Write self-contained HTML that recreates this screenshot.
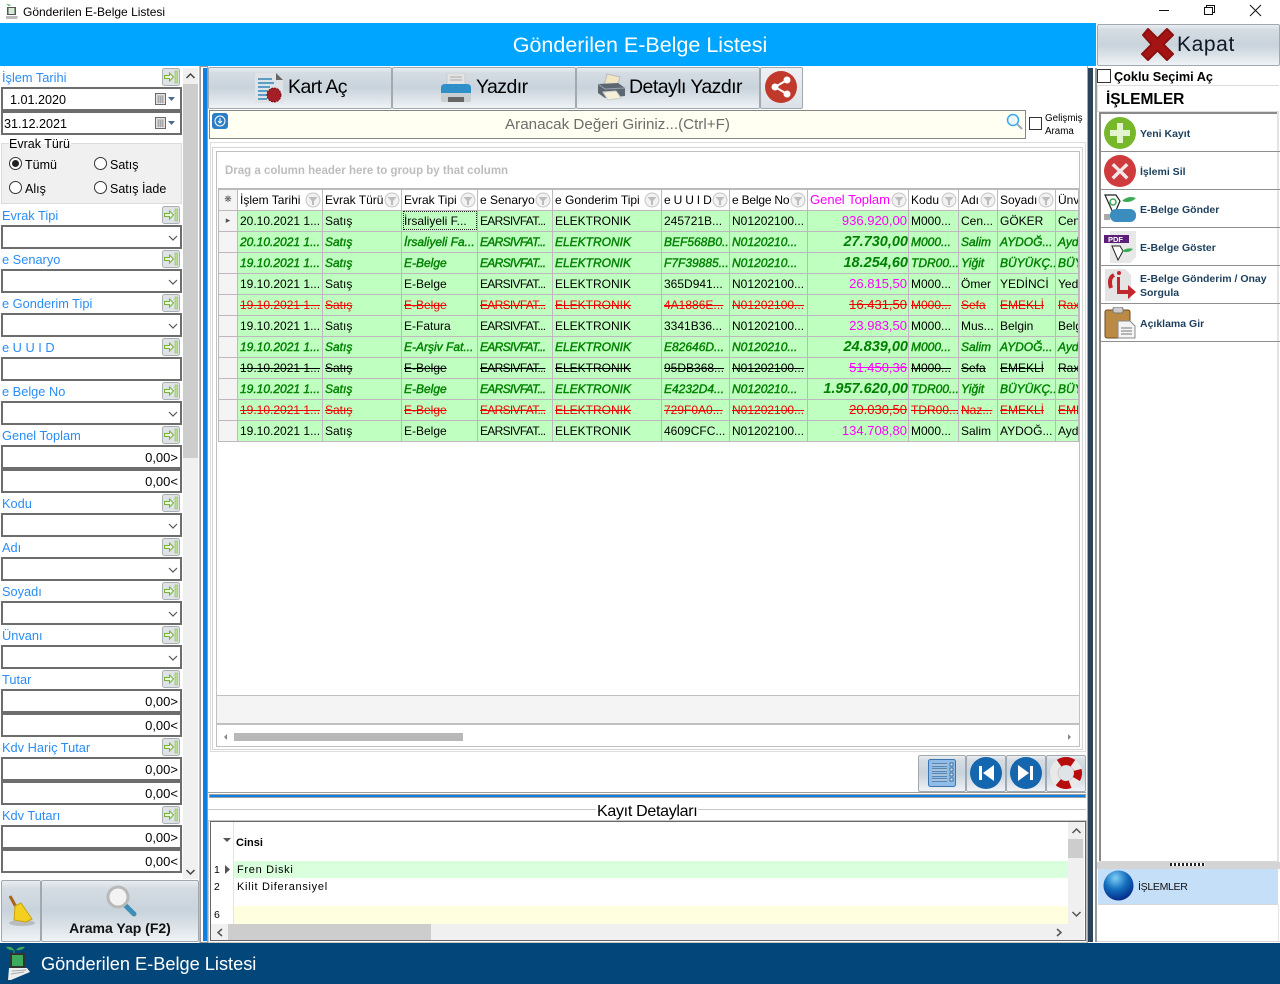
<!DOCTYPE html>
<html lang="tr"><head><meta charset="utf-8"><title>Gönderilen E-Belge Listesi</title>
<style>
*{box-sizing:border-box}
html,body{margin:0;padding:0}
body{width:1280px;height:984px;overflow:hidden;position:relative;background:#fff;font-family:"Liberation Sans",sans-serif;font-size:12px;color:#000}
.a,.l,.i,.sb,.btn,.rad,.it{position:absolute}
.a{white-space:nowrap}
.l{left:2px;height:16px;line-height:16px;color:#2a8df5;font-size:12.8px;white-space:nowrap}
.i{left:1px;width:181px;height:24px;border:2px solid #6d6d6d;background:#fff;line-height:22px;font-size:13px;text-align:right;padding-right:2px}
.sb{left:162px;width:18px;height:18px}
.btn{background:linear-gradient(#e9edf1 0,#d5dce3 12%,#c9d3dc 50%,#dfe5ea 80%,#f0f3f6 100%);border:1px solid #a0a8b0;border-radius:2px;text-align:center}
.rad{width:13px;height:13px;border:1px solid #333;border-radius:50%;background:#fff}
.tb{font-size:19.5px;line-height:28px;letter-spacing:-.55px}
.fl{font-size:12.5px;line-height:15px}
table{position:absolute;left:218px;top:188px;border-collapse:collapse;table-layout:fixed;width:860px;font-size:12px}
td,th{border:1px solid #bdb8bd;padding:0 0 0 2px;overflow:hidden;white-space:nowrap;height:21px;font-weight:normal;text-align:left;background:#bfffbf}
th{background:#fff;position:relative;border-top:2px solid #bdb8bd}
td:first-child,th:first-child{background:#f4f4f4;padding:0;text-align:center;color:#555;font-size:9px}
td:nth-child(5){letter-spacing:-.7px}
th svg{position:absolute;right:1px;top:2px;width:16px;height:16px}
td.m{text-align:right;padding:0 1px 0 0;color:#f0f;font-size:13px}
tr.g td{color:#008000;font-style:italic;-webkit-text-stroke:.4px #008000}
tr.g td.m{color:#008000;font-size:14.5px;font-weight:bold;padding:0;-webkit-text-stroke:0}
tr.r td{color:#f00000;text-decoration:line-through}
tr.r td.m{color:#f00000}
tr.k td{text-decoration:line-through}
td:first-child{text-decoration:none!important}
.it{left:1101px;width:179px;height:38px;border-bottom:1px solid #8f8f8f;font-size:10.5px;font-weight:bold;color:#1c3f5c;line-height:13px}
.it svg{position:absolute;left:3px;top:3px;width:32px;height:32px}
.it span{position:absolute;left:39px;top:14px;white-space:nowrap}
</style></head><body>
<svg width="0" height="0" style="position:absolute">
<symbol id="f" viewBox="0 0 16 16"><circle cx="8" cy="8" r="7" fill="#f2f2f2" stroke="#c4c4c4"/><path d="M3.5 5h9L9 9v4H7V9z" fill="#bdbdbd"/></symbol>
<symbol id="b" viewBox="0 0 18 18"><rect x=".5" y=".5" width="17" height="17" rx="2" fill="#dfe3e5" stroke="#a9b0b3"/><path d="M2.500 7.500h5V5l4 4-4 4v-2.500h-5z" fill="#eef9e2" stroke="#74b334"/><rect x="13" y="3" width="2.500" height="12" fill="#b9dd8e" stroke="#85b84f" stroke-width=".5"/></symbol>
<symbol id="cal" viewBox="0 0 12 13"><rect x=".5" y=".5" width="10" height="11" fill="#e2e2e2" stroke="#6a6a6a"/><path d="M2 3h7M2 5h7M2 7h7M2 9h7M3.5 3v7M5.5 3v7M7.5 3v7" stroke="#999" stroke-width=".7"/></symbol>
<symbol id="chev" viewBox="0 0 10 6"><path d="M1 1l4 4 4-4" fill="none" stroke="#555" stroke-width="1.2"/></symbol>
</svg>

<!-- title bar -->
<svg class="a" style="left:5px;top:3px" width="14" height="17" viewBox="0 0 14 17"><path d="M1 1l5 1-2 1z" fill="#2a9a4a"/><rect x="2" y="4" width="9" height="8" fill="#555"/><rect x="3.500" y="5" width="6" height="6" fill="#d6ead8"/><path d="M1 13h12l-1 3H1z" fill="#bbb"/></svg>
<div class="a" style="left:23px;top:4px;line-height:16px;font-size:12px">Gönderilen E-Belge Listesi</div>
<svg class="a" style="left:1150px;top:0" width="130" height="22" fill="none" stroke="#111"><path d="M9 10.500h10"/><rect x="54.500" y="7.500" width="8" height="7"/><path d="M56.500 7.500v-2h8v7h-2"/><path d="M100 5l11 11M111 5l-11 11"/></svg>

<!-- blue header -->
<div class="a" style="left:0;top:23px;width:1096px;height:43px;background:#00a5ff;color:#fff;font-size:21.5px;line-height:45px;text-align:center;padding-left:184px"><span style="position:relative">Gönderilen E-Belge Listesi</span></div>
<div class="btn" style="left:1097px;top:24px;width:183px;height:42px"></div>
<svg class="a" style="left:1140px;top:27px" width="35" height="35" viewBox="0 0 35 35"><path d="M3 8l5-6 9.500 9.500L27 2l6 6-9.500 9.500L33 27l-6 6-9.500-9.500L8 33l-6-6 9.500-9.500z" fill="#a51414" stroke="#8d1010" stroke-linejoin="round" stroke-width="2"/></svg>
<div class="a" style="left:1177px;top:31px;font-size:21px;line-height:28px;color:#101828;letter-spacing:.6px">Kapat</div>

<!-- left panel -->
<div class="l" style="top:70px">İşlem Tarihi</div><svg class="sb" style="top:68px"><use href="#b"/></svg>
<div class="i" style="top:87px;text-align:left;padding-left:7px;font-size:12.6px">1.01.2020</div>
<div class="i" style="top:111px;text-align:left;padding-left:1px;font-size:12.6px">31.12.2021</div>
<svg class="a" style="left:155px;top:93px" width="22" height="13"><use href="#cal" width="12" height="13"/><path d="M13 4h7l-3.500 4z" fill="#4a6a90"/></svg>
<svg class="a" style="left:155px;top:117px" width="22" height="13"><use href="#cal" width="12" height="13"/><path d="M13 4h7l-3.500 4z" fill="#4a6a90"/></svg>
<div class="a" style="left:1px;top:143px;width:181px;height:61px;background:#f0f0f0;border:1px solid #dcdcdc"></div>
<div class="a" style="left:9px;top:137px;background:#fff;height:7px;width:62px"></div>
<div class="a fl" style="left:9px;top:137px">Evrak Türü</div>
<div class="rad" style="left:9px;top:157px"></div><div class="a" style="left:12px;top:160px;width:7px;height:7px;border-radius:50%;background:#222"></div>
<div class="a fl" style="left:25px;top:158px">Tümü</div>
<div class="rad" style="left:94px;top:157px"></div><div class="a fl" style="left:110px;top:158px">Satış</div>
<div class="rad" style="left:9px;top:181px"></div><div class="a fl" style="left:25px;top:182px">Alış</div>
<div class="rad" style="left:94px;top:181px"></div><div class="a fl" style="left:110px;top:182px">Satış İade</div>

<div class="l" style="top:208px">Evrak Tipi</div><svg class="sb" style="top:206px"><use href="#b"/></svg>
<div class="i" style="top:225px"></div><svg class="a" style="left:168px;top:235px" width="10" height="6"><use href="#chev"/></svg>
<div class="l" style="top:252px">e Senaryo</div><svg class="sb" style="top:250px"><use href="#b"/></svg>
<div class="i" style="top:269px"></div><svg class="a" style="left:168px;top:279px" width="10" height="6"><use href="#chev"/></svg>
<div class="l" style="top:296px">e Gonderim Tipi</div><svg class="sb" style="top:294px"><use href="#b"/></svg>
<div class="i" style="top:313px"></div><svg class="a" style="left:168px;top:323px" width="10" height="6"><use href="#chev"/></svg>
<div class="l" style="top:340px">e U U I D</div><svg class="sb" style="top:338px"><use href="#b"/></svg>
<div class="i" style="top:357px"></div>
<div class="l" style="top:384px">e Belge No</div><svg class="sb" style="top:382px"><use href="#b"/></svg>
<div class="i" style="top:401px"></div><svg class="a" style="left:168px;top:411px" width="10" height="6"><use href="#chev"/></svg>
<div class="l" style="top:428px">Genel Toplam</div><svg class="sb" style="top:426px"><use href="#b"/></svg>
<div class="i" style="top:445px">0,00&gt;</div><div class="i" style="top:469px">0,00&lt;</div>
<div class="l" style="top:496px">Kodu</div><svg class="sb" style="top:494px"><use href="#b"/></svg>
<div class="i" style="top:513px"></div><svg class="a" style="left:168px;top:523px" width="10" height="6"><use href="#chev"/></svg>
<div class="l" style="top:540px">Adı</div><svg class="sb" style="top:538px"><use href="#b"/></svg>
<div class="i" style="top:557px"></div><svg class="a" style="left:168px;top:567px" width="10" height="6"><use href="#chev"/></svg>
<div class="l" style="top:584px">Soyadı</div><svg class="sb" style="top:582px"><use href="#b"/></svg>
<div class="i" style="top:601px"></div><svg class="a" style="left:168px;top:611px" width="10" height="6"><use href="#chev"/></svg>
<div class="l" style="top:628px">Ünvanı</div><svg class="sb" style="top:626px"><use href="#b"/></svg>
<div class="i" style="top:645px"></div><svg class="a" style="left:168px;top:655px" width="10" height="6"><use href="#chev"/></svg>
<div class="l" style="top:672px">Tutar</div><svg class="sb" style="top:670px"><use href="#b"/></svg>
<div class="i" style="top:689px">0,00&gt;</div><div class="i" style="top:713px">0,00&lt;</div>
<div class="l" style="top:740px">Kdv Hariç Tutar</div><svg class="sb" style="top:738px"><use href="#b"/></svg>
<div class="i" style="top:757px">0,00&gt;</div><div class="i" style="top:781px">0,00&lt;</div>
<div class="l" style="top:808px">Kdv Tutarı</div><svg class="sb" style="top:806px"><use href="#b"/></svg>
<div class="i" style="top:825px">0,00&gt;</div><div class="i" style="top:849px">0,00&lt;</div>

<!-- left scrollbar -->
<div class="a" style="left:183px;top:68px;width:15px;height:811px;background:#f0f0f0"></div>
<div class="a" style="left:183px;top:84px;width:15px;height:374px;background:#cdcdcd"></div>
<svg class="a" style="left:185px;top:72px" width="11" height="8" fill="none" stroke="#444" stroke-width="1.500"><path d="M1.500 6L5.500 2l4 4"/></svg>
<svg class="a" style="left:185px;top:868px" width="11" height="8" fill="none" stroke="#444" stroke-width="1.500"><path d="M1.500 2l4 4 4-4"/></svg>

<!-- search buttons -->
<div class="a" style="left:0;top:879px;width:200px;height:64px;background:#fff"></div>
<div class="btn" style="left:1px;top:880px;width:40px;height:62px"></div>
<div class="btn" style="left:41px;top:880px;width:158px;height:62px"></div>
<svg class="a" style="left:7px;top:893px" width="30" height="34" viewBox="0 0 30 34"><ellipse cx="15" cy="30" rx="13" ry="3" fill="#999" opacity=".5"/><path d="M3 3l6 11" stroke="#a8641e" stroke-width="3"/><path d="M8 13l6-3 11 16-6 3-12-2z" fill="#f2cf21" stroke="#c9a40c"/></svg>
<svg class="a" style="left:104px;top:884px" width="34" height="34" viewBox="0 0 34 34"><path d="M21 21l9 9" stroke="#3d8fb8" stroke-width="5" stroke-linecap="round"/><circle cx="14" cy="13" r="10" fill="#f3f3f3" stroke="#b9b9b9" stroke-width="3"/></svg>
<div class="a" style="left:41px;top:920px;width:158px;text-align:center;font-weight:bold;font-size:14px;line-height:17px;color:#111">Arama Yap (F2)</div>

<!-- vertical splitter -->
<div class="a" style="left:200px;top:66px;width:8px;height:877px;background:#fff;border:1px solid #9a9a9a"></div>
<div class="a" style="left:203px;top:68px;width:4px;height:873px;background:#0f7fe0"></div>
<div class="a" style="left:199px;top:66px;width:1px;height:877px;background:#bbb"></div>

<!-- main toolbar -->
<div class="btn" style="left:208px;top:67px;width:184px;height:42px"></div>
<div class="btn" style="left:392px;top:67px;width:184px;height:42px"></div>
<div class="btn" style="left:576px;top:67px;width:184px;height:42px"></div>
<div class="btn" style="left:760px;top:67px;width:43px;height:42px;background:linear-gradient(#eef1f4,#dbe1e7)"></div>
<svg class="a" style="left:254px;top:71px" width="30" height="33" viewBox="0 0 30 33"><path d="M1 2h21l7 7v23H1z" fill="#dfe3e6"/><path d="M22 2l7 7h-7z" fill="#666"/><path d="M4 8h14M4 12h16M4 16h12M4 20h10M4 24h9M4 28h9" stroke="#5a9ec8" stroke-width="2"/><circle cx="20" cy="24" r="7" fill="#a31f25" stroke="#7c1014" stroke-dasharray="2 1"/></svg>
<div class="a tb" style="left:288px;top:73px">Kart Aç</div>
<svg class="a" style="left:440px;top:73px" width="32" height="30" viewBox="0 0 32 30"><rect x="7" y="0" width="18" height="13" fill="#e3e3e3" stroke="#ccc"/><path d="M10 4h12M10 7h12" stroke="#aaa"/><path d="M1 15q0-4 4-4h22q4 0 4 4v5H1z" fill="#2f8fc9"/><path d="M1 20h30v7q0 2-2 2H3q-2 0-2-2z" fill="#c9ced1"/><rect x="8" y="24" width="16" height="5" fill="#666"/></svg>
<div class="a tb" style="left:476px;top:73px">Yazdır</div>
<svg class="a" style="left:596px;top:73px" width="30" height="28" viewBox="0 0 30 28"><path d="M11 1l13 3-3 9H8z" fill="#f0e6c4" stroke="#bbb"/><path d="M2 11l20-1 7 5v8l-20 2-7-5z" fill="#5b6670"/><path d="M2 11l7 5 20-1" fill="none" stroke="#9aa4ad"/><path d="M7 19l13-1 5 7-13 2z" fill="#f5efd8" stroke="#ccc"/></svg>
<div class="a tb" style="left:629px;top:73px">Detaylı Yazdır</div>
<svg class="a" style="left:764px;top:70px" width="34" height="34" viewBox="0 0 34 34"><circle cx="17" cy="17" r="16" fill="#c0392b"/><path d="M23 10L11 17l12 7" stroke="#fff" stroke-width="2" fill="none"/><circle cx="23" cy="10" r="3.500" fill="#fff"/><circle cx="11" cy="17" r="3.500" fill="#fff"/><circle cx="23" cy="24" r="3.500" fill="#fff"/></svg>

<!-- search box -->
<div class="a" style="left:209px;top:110px;width:817px;height:29px;background:#fffff2;border:1px solid #858585;color:#6d6d6d;font-size:15.2px;line-height:27px;text-align:center">Aranacak Değeri Giriniz...(Ctrl+F)</div>
<svg class="a" style="left:212px;top:113px" width="16" height="16" viewBox="0 0 16 16"><rect width="16" height="16" rx="3" fill="#2b7fc4"/><circle cx="8" cy="8" r="5" fill="none" stroke="#fff"/><path d="M8 5v5M6 8l2 2 2-2" stroke="#fff" fill="none"/></svg>
<svg class="a" style="left:1006px;top:113px" width="17" height="17" viewBox="0 0 17 17"><circle cx="7" cy="7" r="5.500" fill="#eef8ff" stroke="#38a8e8" stroke-width="1.500"/><path d="M11 11l5 5" stroke="#9ab" stroke-width="2"/></svg>
<div class="a" style="left:1029px;top:117px;width:13px;height:13px;border:1px solid #333;background:#fff"></div>
<div class="a" style="left:1045px;top:112px;font-size:9.8px;line-height:13px">Gelişmiş<br>Arama</div>

<!-- grid frame -->
<div class="a" style="left:210px;top:142px;width:876px;height:610px;border:1px solid #ddd"></div>
<div class="a" style="left:212px;top:147px;width:871px;height:603px;border:1px solid #d4d4d4"></div>
<div class="a" style="left:216px;top:151px;width:864px;height:596px;border:1px solid #c0c0c0;background:#fff"></div>
<div class="a" style="left:225px;top:164px;font-weight:bold;font-size:11.500px;line-height:14px;color:#bdbdbd">Drag a column header here to group by that column</div>
<table>
<colgroup><col style="width:19px"><col style="width:85px"><col style="width:79px"><col style="width:76px"><col style="width:75px"><col style="width:109px"><col style="width:68px"><col style="width:78px"><col style="width:101px"><col style="width:50px"><col style="width:39px"><col style="width:58px"><col style="width:23px"></colgroup>
<tr><th>❋</th><th>İşlem Tarihi<svg><use href="#f"/></svg></th><th>Evrak Türü<svg><use href="#f"/></svg></th><th>Evrak Tipi<svg><use href="#f"/></svg></th><th>e Senaryo<svg><use href="#f"/></svg></th><th>e Gonderim Tipi<svg><use href="#f"/></svg></th><th style="letter-spacing:-.2px">e U U I D<svg><use href="#f"/></svg></th><th style="letter-spacing:-.2px">e Belge No<svg><use href="#f"/></svg></th><th style="color:#f0f;font-size:13px">Genel Toplam<svg><use href="#f"/></svg></th><th>Kodu<svg><use href="#f"/></svg></th><th>Adı<svg><use href="#f"/></svg></th><th>Soyadı<svg><use href="#f"/></svg></th><th>Ünv</th></tr>
<tr class="n"><td>▸</td><td>20.10.2021 1...</td><td>Satış</td><td style="outline:1px dotted #222;outline-offset:-2px">İrsaliyeli F...</td><td>EARSIVFAT...</td><td>ELEKTRONIK</td><td>245721B...</td><td>N01202100...</td><td class="m">936.920,00</td><td>M000...</td><td>Cen...</td><td>GÖKER</td><td>Cen</td></tr>
<tr class="g"><td></td><td>20.10.2021 1...</td><td>Satış</td><td>İrsaliyeli Fa...</td><td>EARSIVFAT...</td><td>ELEKTRONIK</td><td>BEF568B0...</td><td>N0120210...</td><td class="m">27.730,00</td><td>M000...</td><td>Salim</td><td>AYDOĞ...</td><td>Ayd</td></tr>
<tr class="g"><td></td><td>19.10.2021 1...</td><td>Satış</td><td>E-Belge</td><td>EARSIVFAT...</td><td>ELEKTRONIK</td><td>F7F39885...</td><td>N0120210...</td><td class="m">18.254,60</td><td>TDR00...</td><td>Yiğit</td><td>BÜYÜKÇ...</td><td>BÜY</td></tr>
<tr class="n"><td></td><td>19.10.2021 1...</td><td>Satış</td><td>E-Belge</td><td>EARSIVFAT...</td><td>ELEKTRONIK</td><td>365D941...</td><td>N01202100...</td><td class="m">26.815,50</td><td>M000...</td><td>Ömer</td><td>YEDİNCİ</td><td>Yed</td></tr>
<tr class="r"><td></td><td>19.10.2021 1...</td><td>Satış</td><td>E-Belge</td><td>EARSIVFAT...</td><td>ELEKTRONIK</td><td>4A1886E...</td><td>N01202100...</td><td class="m">16.431,50</td><td>M000...</td><td>Sefa</td><td>EMEKLİ</td><td>Rax</td></tr>
<tr class="n"><td></td><td>19.10.2021 1...</td><td>Satış</td><td>E-Fatura</td><td>EARSIVFAT...</td><td>ELEKTRONIK</td><td>3341B36...</td><td>N01202100...</td><td class="m">23.983,50</td><td>M000...</td><td>Mus...</td><td>Belgin</td><td>Belg</td></tr>
<tr class="g"><td></td><td>19.10.2021 1...</td><td>Satış</td><td>E-Arşiv Fat...</td><td>EARSIVFAT...</td><td>ELEKTRONIK</td><td>E82646D...</td><td>N0120210...</td><td class="m">24.839,00</td><td>M000...</td><td>Salim</td><td>AYDOĞ...</td><td>Ayd</td></tr>
<tr class="k"><td></td><td>19.10.2021 1...</td><td>Satış</td><td>E-Belge</td><td>EARSIVFAT...</td><td>ELEKTRONIK</td><td>95DB368...</td><td>N01202100...</td><td class="m">51.450,36</td><td>M000...</td><td>Sefa</td><td>EMEKLİ</td><td>Rax</td></tr>
<tr class="g"><td></td><td>19.10.2021 1...</td><td>Satış</td><td>E-Belge</td><td>EARSIVFAT...</td><td>ELEKTRONIK</td><td>E4232D4...</td><td>N0120210...</td><td class="m">1.957.620,00</td><td>TDR00...</td><td>Yiğit</td><td>BÜYÜKÇ...</td><td>BÜY</td></tr>
<tr class="r"><td></td><td>19.10.2021 1...</td><td>Satış</td><td>E-Belge</td><td>EARSIVFAT...</td><td>ELEKTRONIK</td><td>729F0A0...</td><td>N01202100...</td><td class="m">20.030,50</td><td>TDR00...</td><td>Naz...</td><td>EMEKLİ</td><td>EME</td></tr>
<tr class="n"><td></td><td>19.10.2021 1...</td><td>Satış</td><td>E-Belge</td><td>EARSIVFAT...</td><td>ELEKTRONIK</td><td>4609CFC...</td><td>N01202100...</td><td class="m">134.708,80</td><td>M000...</td><td>Salim</td><td>AYDOĞ...</td><td>Ayd</td></tr>
</table>
<div class="a" style="left:217px;top:695px;width:862px;height:30px;background:#f4f4f4;border-top:1px solid #c0c0c0;border-bottom:2px solid #c0c0c0"></div>
<div class="a" style="left:234px;top:733px;width:229px;height:8px;background:#b8b8b8"></div>
<svg class="a" style="left:223px;top:734px" width="6" height="6"><path d="M4 0v6L1 3z" fill="#888"/></svg>
<svg class="a" style="left:1066px;top:734px" width="6" height="6"><path d="M2 0v6l3-3z" fill="#888"/></svg>

<!-- bottom toolbar -->
<div class="btn" style="left:918px;top:755px;width:48px;height:37px"></div>
<div class="btn" style="left:966px;top:755px;width:40px;height:37px"></div>
<div class="btn" style="left:1006px;top:755px;width:40px;height:37px"></div>
<div class="btn" style="left:1046px;top:755px;width:40px;height:37px"></div>
<svg class="a" style="left:928px;top:759px" width="28" height="28" viewBox="0 0 28 28"><rect x=".5" y=".5" width="27" height="27" rx="2" fill="#8fbce8" stroke="#3a75b0"/><path d="M4 6h15M4 11h15M4 16h15M4 21h15" stroke="#1f4f80" stroke-width="3"/><path d="M4 6h15M4 11h15M4 16h15M4 21h15" stroke="#d6e8f8" stroke-width="1.500"/><path d="M22 4h3v3h-3zM22 9h3v3h-3zM22 14h3v3h-3zM22 19h3v3h-3z" fill="#d6e8f8" stroke="#1f4f80" stroke-width=".7"/></svg>
<svg class="a" style="left:970px;top:757px" width="32" height="32" viewBox="0 0 32 32"><circle cx="16" cy="16" r="16" fill="#1466ae"/><path d="M9 9h3v14H9zM24 8v16L13 16z" fill="#fff"/></svg>
<svg class="a" style="left:1010px;top:757px" width="32" height="32" viewBox="0 0 32 32"><circle cx="16" cy="16" r="16" fill="#1466ae"/><path d="M20 9h3v14h-3zM8 8v16l11-8z" fill="#fff"/></svg>
<svg class="a" style="left:1050px;top:757px" width="32" height="32" viewBox="0 0 32 32"><circle cx="16" cy="16" r="12" fill="#dfe4e9" stroke="#e9e9e9" stroke-width="8"/><circle cx="16" cy="16" r="8" fill="#dfe4e9" stroke="#c4c4c4" stroke-width=".7"/><path d="M9.100 6.200A12 12 0 0 1 22.900 6.200M27.600 12.900A12 12 0 0 1 26.400 22M20.100 27.300A12 12 0 0 1 8.300 25.200" fill="none" stroke="#b80d0d" stroke-width="8"/></svg>

<!-- horizontal splitter -->
<div class="a" style="left:208px;top:792px;width:878px;height:1px;background:#a0a0a0"></div>
<div class="a" style="left:209px;top:794px;width:877px;height:4px;border:1px solid #a0a0a0;background:#0f7fe0"></div>
<div class="a" style="left:208px;top:809px;width:878px;height:1px;background:#c8c8c8"></div>
<div class="a" style="left:596px;top:801px;background:#fff;font-size:16px;line-height:21px;letter-spacing:-.3px;padding:0 1px">Kayıt Detayları</div>

<!-- details grid -->
<div class="a" style="left:208px;top:820px;width:879px;height:123px;border:1px solid #c8c8c8"></div>
<div class="a" style="left:210px;top:821px;width:876px;height:120px;border:1px solid #666;background:#fff"></div>
<div class="a" style="left:233px;top:822px;width:1px;height:102px;background:#e4e4e4"></div>
<svg class="a" style="left:223px;top:838px" width="8" height="5"><path d="M0 0h8L4 4z" fill="#555"/></svg>
<div class="a" style="left:236px;top:836px;font-weight:bold;font-size:11px;line-height:14px">Cinsi</div>
<div class="a" style="left:234px;top:861px;width:834px;height:17px;background:#d9ffdc"></div>
<div class="a" style="left:234px;top:906px;width:834px;height:18px;background:#ffffe0"></div>
<div class="a" style="left:214px;top:864px;font-size:10.5px;line-height:13px">1</div>
<svg class="a" style="left:225px;top:865px" width="6" height="9"><path d="M0 0l5 4.500L0 9z" fill="#555"/></svg>
<div class="a" style="left:214px;top:881px;font-size:10.5px;line-height:13px">2</div>
<div class="a" style="left:214px;top:909px;font-size:10.5px;line-height:13px">6</div>
<div class="a" style="left:237px;top:864px;font-size:11px;line-height:13px;letter-spacing:.7px">Fren Diski</div>
<div class="a" style="left:237px;top:881px;font-size:11px;line-height:13px;letter-spacing:.7px">Kilit Diferansiyel</div>
<div class="a" style="left:1068px;top:822px;width:16px;height:118px;background:#f0f0f0"></div>
<div class="a" style="left:1068px;top:839px;width:15px;height:19px;background:#cdcdcd"></div>
<svg class="a" style="left:1071px;top:827px" width="11" height="8" fill="none" stroke="#555" stroke-width="1.500"><path d="M1.500 6L5.500 2l4 4"/></svg>
<svg class="a" style="left:1071px;top:910px" width="11" height="8" fill="none" stroke="#555" stroke-width="1.500"><path d="M1.500 2l4 4 4-4"/></svg>
<div class="a" style="left:211px;top:924px;width:857px;height:16px;background:#f0f0f0"></div>
<div class="a" style="left:228px;top:924px;width:203px;height:16px;background:#cdcdcd"></div>
<svg class="a" style="left:216px;top:928px" width="8" height="9" fill="none" stroke="#555" stroke-width="1.500"><path d="M6 1L2 4.500 6 8"/></svg>
<svg class="a" style="left:1055px;top:928px" width="8" height="9" fill="none" stroke="#555" stroke-width="1.500"><path d="M2 1l4 3.500L2 8"/></svg>

<!-- right splitter -->
<div class="a" style="left:1087px;top:66px;width:1px;height:877px;background:#aaa"></div>
<div class="a" style="left:1088px;top:68px;width:5px;height:874px;background:#2c4257"></div>
<div class="a" style="left:1095px;top:68px;width:2px;height:874px;background:#9a9a9a"></div>

<!-- right panel -->
<div class="a" style="left:1097px;top:69px;width:14px;height:14px;border:1px solid #333;background:#fff"></div>
<div class="a" style="left:1114px;top:69px;font-weight:bold;font-size:12.7px;line-height:16px">Çoklu Seçimi Aç</div>
<div class="a" style="left:1097px;top:85px;width:182px;height:27px;border:1px solid #ddd;border-right:0;font-weight:bold;font-size:15.500px;line-height:28px;padding-left:8px">İŞLEMLER</div>
<div class="a" style="left:1099px;top:112px;width:2px;height:750px;background:#8a8a8a"></div>
<div class="a" style="left:1099px;top:112px;width:179px;height:2px;background:#8a8a8a"></div>
<div class="a" style="left:1277px;top:112px;width:2px;height:750px;background:#e4e4e4"></div>
<div class="a" style="left:1099px;top:861px;width:180px;height:1px;background:#d8d8d8"></div>

<div class="it" style="top:114px"><svg viewBox="0 0 32 32"><circle cx="16" cy="16" r="16" fill="#76b82a"/><path d="M13 6h6v7h7v6h-7v7h-6v-7H6v-6h7z" fill="#e4f4cf"/></svg><span>Yeni Kayıt</span></div>
<div class="it" style="top:152px"><svg viewBox="0 0 32 32"><circle cx="16" cy="16" r="16" fill="#cf3a3c"/><path d="M10 8l6 6 6-6 2.500 2.500-6 5.500 6 6-2.500 2.500-6-6-6 6L7.500 22l6-6-6-5.500z" fill="#f6e6e6"/></svg><span>İşlemi Sil</span></div>
<div class="it" style="top:190px"><svg viewBox="0 0 32 32"><path d="M1 2h11l4 6-6 14z" fill="#fff" stroke="#222" stroke-width="1.200"/><circle cx="9" cy="9" r="3" fill="none" stroke="#3aaa55" stroke-width="1.500"/><path d="M18 8q6-6 14-3-6 6-14 3z" fill="#3aaa55"/><rect x="6" y="16" width="26" height="13" rx="6" fill="#3a8dbe"/><rect x="0" y="21" width="6" height="6" fill="#aaa"/></svg><span>E-Belge Gönder</span></div>
<div class="it" style="top:228px"><svg viewBox="0 0 32 32"><path d="M6 0h26v26l-6 6H6z" fill="#e8e8e8"/><rect y="4" width="25" height="8" fill="#5b1f79"/><text x="4" y="11" font-size="7.500" font-weight="bold" fill="#fff" font-family="Liberation Sans">PDF</text><path d="M8 15h8l3 5-5 9z" fill="#fff" stroke="#222"/><path d="M18 20q6-4 11-2-5 5-11 2z" fill="#3aaa55"/></svg><span>E-Belge Göster</span></div>
<div class="it" style="top:266px"><svg viewBox="0 0 32 32"><path d="M1 0h20l6 6v26H1z" fill="#e4e4e4"/><path d="M10 6q-6 3-3 13" fill="none" stroke="#c1272d" stroke-width="4"/><circle cx="15" cy="4" r="2" fill="#c1272d"/><path d="M13 8h3v13h8v-5l8 7-8 7v-5H13z" fill="#c1272d"/></svg><span style="top:6px;line-height:14px">E-Belge Gönderim / Onay<br>Sorgula</span></div>
<div class="it" style="top:304px"><svg viewBox="0 0 32 32"><rect x="1" y="3" width="25" height="28" rx="2" fill="#bb8b45" stroke="#6e4d1f"/><rect x="9" y="0" width="10" height="6" rx="2" fill="#ccc" stroke="#777"/><path d="M14 14h12l5 5v12H14z" fill="#f4f4f4" stroke="#888"/><path d="M17 21h11M17 24h11M17 27h11" stroke="#777"/></svg><span>Açıklama Gir</span></div>

<!-- right bottom -->
<div class="a" style="left:1097px;top:862px;width:183px;height:7px;background:#d4d4d4"></div>
<div class="a" style="left:1170px;top:863px;width:35px;height:3px;background:repeating-linear-gradient(90deg,#222 0 2px,#fff 2px 4px)"></div>
<div class="a" style="left:1098px;top:869px;width:180px;height:35px;background:#c5dff8;font-size:10.5px;line-height:37px;padding-left:40px;letter-spacing:-.3px;color:#111">İŞLEMLER</div>
<div class="a" style="left:1098px;top:904px;width:180px;height:1px;background:#d8d8d8"></div>
<svg class="a" style="left:1103px;top:870px" width="31" height="31" viewBox="0 0 31 31"><defs><radialGradient id="gl" cx=".4" cy=".25" r=".85"><stop offset="0" stop-color="#7fd0f5"/><stop offset=".45" stop-color="#1570c0"/><stop offset="1" stop-color="#001a7a"/></radialGradient></defs><circle cx="15.500" cy="15.500" r="15" fill="url(#gl)"/></svg>
<div class="a" style="left:1097px;top:941px;width:183px;height:1px;background:#d8d8d8"></div>
<div class="a" style="left:1278px;top:905px;width:1px;height:36px;background:#e4e4e4"></div>

<!-- taskbar -->
<div class="a" style="left:0;top:943px;width:1280px;height:41px;background:#03467a"></div>
<svg class="a" style="left:5px;top:946px" width="28" height="36" viewBox="0 0 28 36"><path d="M1 1q6-1 8 3-5 1-8-3zM11 4q3-4 9-3-3 4-9 3z" fill="#3aaa55"/><path d="M9 4v4" stroke="#3aaa55"/><rect x="5" y="7" width="15" height="15" fill="#333"/><rect x="7" y="9" width="11" height="11" fill="#3cab5c"/><path d="M4 22h18l3 4-19 8H3z" fill="#eee"/><path d="M7 25l14-1M6 28l13-2" stroke="#aaa"/></svg>
<div class="a" style="left:41px;top:951px;color:#fff;font-size:18.2px;line-height:26px">Gönderilen E-Belge Listesi</div>
</body></html>
